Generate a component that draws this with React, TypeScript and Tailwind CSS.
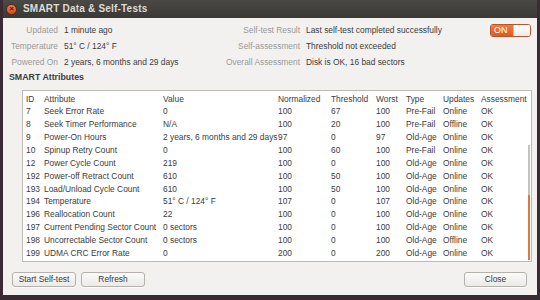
import React from "react";

type Row = [string, string, string, string, string, string, string, string, string];

const rows: Row[] = [
  ["7", "Seek Error Rate", "0", "100", "67", "100", "Pre-Fail", "Online", "OK"],
  ["8", "Seek Timer Performance", "N/A", "100", "20", "100", "Pre-Fail", "Offline", "OK"],
  ["9", "Power-On Hours", "2 years, 6 months and 29 days", "97", "0", "97", "Old-Age", "Online", "OK"],
  ["10", "Spinup Retry Count", "0", "100", "60", "100", "Pre-Fail", "Online", "OK"],
  ["12", "Power Cycle Count", "219", "100", "0", "100", "Old-Age", "Online", "OK"],
  ["192", "Power-off Retract Count", "610", "100", "50", "100", "Old-Age", "Online", "OK"],
  ["193", "Load/Unload Cycle Count", "610", "100", "50", "100", "Old-Age", "Online", "OK"],
  ["194", "Temperature", "51° C / 124° F", "107", "0", "107", "Old-Age", "Online", "OK"],
  ["196", "Reallocation Count", "22", "100", "0", "100", "Old-Age", "Online", "OK"],
  ["197", "Current Pending Sector Count", "0 sectors", "100", "0", "100", "Old-Age", "Online", "OK"],
  ["198", "Uncorrectable Sector Count", "0 sectors", "100", "0", "100", "Old-Age", "Offline", "OK"],
  ["199", "UDMA CRC Error Rate", "0", "200", "0", "200", "Old-Age", "Online", "OK"],
];

const headers = ["ID", "Attribute", "Value", "Normalized", "Threshold", "Worst", "Type", "Updates", "Assessment"];

const cols = "grid grid-cols-[18px_119px_115px_53px_45px_30px_37px_38px_1fr]";

function Button({ label, className }: { label: string; className: string }) {
  return (
    <div
      className={`h-[15px] flex items-center justify-center rounded-[3px] border border-[#b5b1ab] bg-gradient-to-b from-[#fbfbfa] to-[#ebeae8] text-[#3c3c3c] shadow-[0_1px_0_rgba(255,255,255,0.8)] ${className}`}
    >
      {label}
    </div>
  );
}

export default function App() {
  return (
    <div
      className="w-[540px] h-[300px] bg-[#3a2a33] overflow-hidden text-[8.4px] leading-none"
      style={{ fontFamily: '"Liberation Sans", Arial, sans-serif' }}
    >
      <div className="ml-[3px] w-[534px] h-[295px] bg-[#f2f1f0] flex flex-col">
        {/* title bar */}
        <div className="h-[18px] bg-gradient-to-b from-[#4a4945] to-[#3a3935] flex items-center px-[2px] shrink-0">
          <div className="w-[11px] h-[11px] rounded-full bg-gradient-to-b from-[#f37a50] to-[#d8481c] border border-[#5a2a1a] flex items-center justify-center ml-[1px]">
            <span className="text-[#4a1a0c] text-[8px] font-bold leading-none">×</span>
          </div>
          <span className="ml-[6px] text-[#dfdbd2] font-bold text-[10px] tracking-[0.2px]">SMART Data &amp; Self-Tests</span>
        </div>

        {/* info */}
        <div className="flex mt-[4px] h-[48px]">
          <div className="w-[197px] grid grid-cols-[55px_1fr] gap-x-[6px] auto-rows-[16px] items-center">
            <span className="text-right text-[#9a9a98]">Updated</span>
            <span className="text-[#3c3c3c]">1 minute ago</span>
            <span className="text-right text-[#9a9a98]">Temperature</span>
            <span className="text-[#3c3c3c]">51° C / 124° F</span>
            <span className="text-right text-[#9a9a98]">Powered On</span>
            <span className="text-[#3c3c3c]">2 years, 6 months and 29 days</span>
          </div>
          <div className="flex-1 grid grid-cols-[100px_1fr] gap-x-[6px] auto-rows-[16px] items-center">
            <span className="text-right text-[#9a9a98]">Self-test Result</span>
            <span className="text-[#3c3c3c]">Last self-test completed successfully</span>
            <span className="text-right text-[#9a9a98]">Self-assessment</span>
            <span className="text-[#3c3c3c]">Threshold not exceeded</span>
            <span className="text-right text-[#9a9a98]">Overall Assessment</span>
            <span className="text-[#3c3c3c]">Disk is OK, 16 bad sectors</span>
          </div>
          <div className="w-[47px] pt-[2px]">
            <div className="w-[41px] h-[13px] flex rounded-[3px] border border-[#b5552a] overflow-hidden">
              <div className="w-[22px] bg-gradient-to-b from-[#f07a45] to-[#dd5a22] text-white text-[9px] flex items-center pl-[3px]">ON</div>
              <div className="flex-1 bg-gradient-to-b from-[#ffffff] to-[#ececea] border-l border-[#c8c4be]"></div>
            </div>
          </div>
        </div>

        <div className="h-[14px] flex items-center pl-[6px] font-bold text-[#3c3c3c] text-[8.8px]">SMART Attributes</div>

        {/* table */}
        <div className="mt-[6px] ml-[19px] w-[510px] h-[172px] bg-white border border-[#bdb9b3] relative pl-[3px]">
          <div className={`${cols} h-[14px] items-center pt-[3px] text-[#3c3c3c]`}>
            {headers.map((h) => (
              <span key={h} className="whitespace-nowrap">{h}</span>
            ))}
          </div>
          {rows.map((r) => (
            <div key={r[0]} className={`${cols} h-[12.9px] items-center text-[#3c3c3c]`}>
              {r.map((c, i) => (
                <span key={i} className="whitespace-nowrap">{c}</span>
              ))}
            </div>
          ))}
          <div className="absolute right-[1px] top-[54px] w-[2px] h-[50px] bg-[#c6c3bf]"></div>
          <div className="absolute right-[1px] top-[104px] w-[2px] h-[65px] bg-[#e0763e]"></div>
        </div>

        {/* buttons */}
        <div className="flex mt-[10px] px-[9px]">
          <Button label="Start Self-test" className="w-[64px]" />
          <Button label="Refresh" className="w-[64px] ml-[5px]" />
          <div className="flex-1" />
          <Button label="Close" className="w-[63px] mr-[1px]" />
        </div>
      </div>
    </div>
  );
}
